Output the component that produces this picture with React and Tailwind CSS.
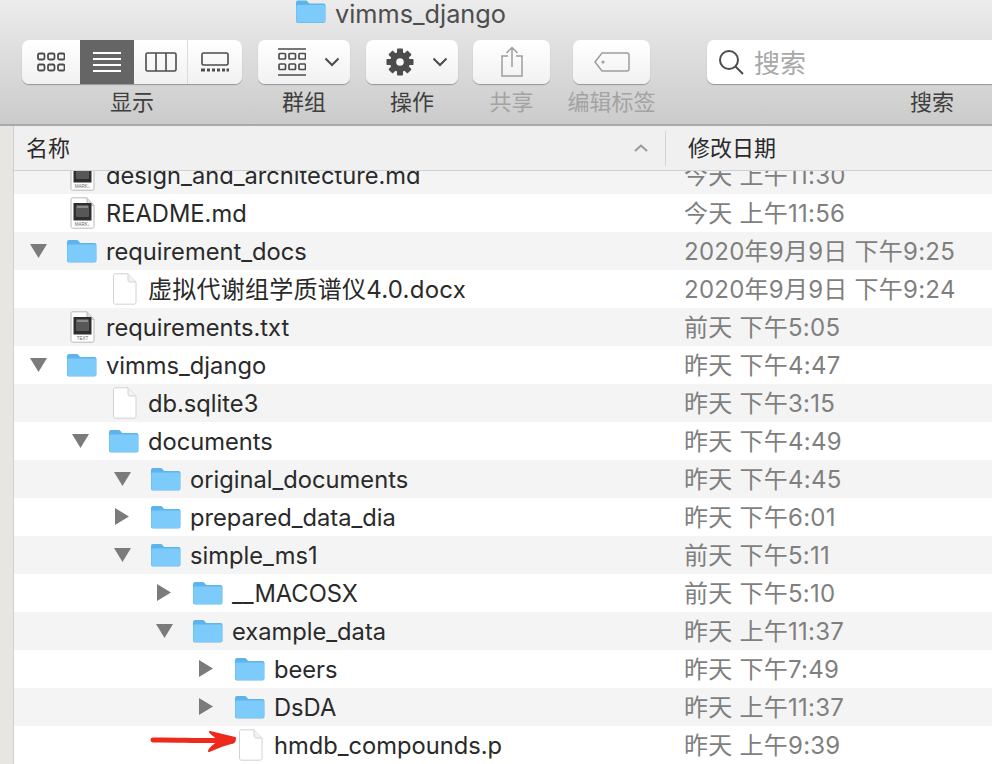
const FONT = 'font-["Inter","Noto_Sans_CJK_SC",sans-serif]';

const rows = [
  { name: "design_and_architecture.md", date: "今天 上午11:30", level: 0, icon: "md", bg: 1 },
  { name: "README.md", date: "今天 上午11:56", level: 0, icon: "md" },
  { name: "requirement_docs", date: "2020年9月9日 下午9:25", level: 0, icon: "folder", tri: "down", bg: 1 },
  { name: "虚拟代谢组学质谱仪4.0.docx", date: "2020年9月9日 下午9:24", level: 1, icon: "doc", cjk: true },
  { name: "requirements.txt", date: "前天 下午5:05", level: 0, icon: "txt", bg: 1 },
  { name: "vimms_django", date: "昨天 下午4:47", level: 0, icon: "folder", tri: "down" },
  { name: "db.sqlite3", date: "昨天 下午3:15", level: 1, icon: "doc", bg: 1 },
  { name: "documents", date: "昨天 下午4:49", level: 1, icon: "folder", tri: "down" },
  { name: "original_documents", date: "昨天 下午4:45", level: 2, icon: "folder", tri: "down", bg: 1 },
  { name: "prepared_data_dia", date: "昨天 下午6:01", level: 2, icon: "folder", tri: "right" },
  { name: "simple_ms1", date: "前天 下午5:11", level: 2, icon: "folder", tri: "down", bg: 1 },
  { name: "__MACOSX", date: "前天 下午5:10", level: 3, icon: "folder", tri: "right" },
  { name: "example_data", date: "昨天 上午11:37", level: 3, icon: "folder", tri: "down", bg: 1 },
  { name: "beers", date: "昨天 下午7:49", level: 4, icon: "folder", tri: "right" },
  { name: "DsDA", date: "昨天 上午11:37", level: 4, icon: "folder", tri: "right", bg: 1 },
  { name: "hmdb_compounds.p", date: "昨天 上午9:39", level: 4, icon: "doc", arrow: true },
];

function Folder({ className = "-ml-[2px] w-[31px] h-[24px]" }) {
  return (
    <svg viewBox="0 0 31 24" className={className}>
      <path d="M1 3.500C1 1.800 1.800 1 3 1h7.500c1.200 0 1.800.6 2.500 1.600L14 4h14.500C29.600 4 30.500 4.900 30.500 6v15.500c0 1.200-.9 2-2 2H3c-1.200 0-2-.8-2-2Z" fill="#5db4ec" />
      <path d="M1.400 7.200c0-1.100.7-1.700 1.700-1.700h25.200c1 0 1.700.6 1.700 1.700v14.200c0 .9-.7 1.500-1.600 1.500H3c-.9 0-1.600-.6-1.600-1.500Z" fill="#7ccbfb" />
    </svg>
  );
}

function Doc() {
  return (
    <svg viewBox="0 0 25 32" className="h-[32px] w-[25px]">
      <path d="M1.500 3C1.500 1.600 2.200.8 3.500.8H16l8 8.200V29c0 1.300-.8 2.200-2 2.200H3.500c-1.300 0-2-.9-2-2.200Z" fill="#fff" stroke="#d2d2d2" />
      <path d="M16 .8V7c0 1.300.8 2 2 2h6" fill="#f2f2f2" stroke="#d2d2d2" />
    </svg>
  );
}

function FileBadge({ label }) {
  return (
    <svg viewBox="0 0 25 32" className="h-[32px] w-[25px]">
      <path d="M1 2.500C1 1.400 1.600.8 2.600.8H17l7 7.400V29.500c0 1-.6 1.700-1.600 1.700H2.600c-1 0-1.600-.7-1.600-1.700Z" fill="#fff" stroke="#b9b9b9" />
      <path d="M17 .8V7c0 .8.4 1.200 1.200 1.200H24" fill="#dedede" stroke="#b9b9b9" />
      <rect x="3.500" y="6" width="18" height="17.500" fill="#2e2e2e" />
      <rect x="6.500" y="8.500" width="12" height="11" fill="#8a8a8a" />
      <rect x="6.500" y="11" width="12" height="8.500" fill="#575757" />
      <text x="12.500" y="29" textAnchor="middle" fontSize="4.500" fill="#666" fontFamily="Liberation Sans">{label}</text>
    </svg>
  );
}

function Triangle({ dir }) {
  return dir === "down" ? (
    <svg viewBox="0 0 17 14" className="h-[14px] w-[17px]"><path d="M0 0h17L8.500 14Z" fill="#7b7b7b" /></svg>
  ) : (
    <svg viewBox="0 0 14 17" className="ml-[1px] h-[17px] w-[14px]"><path d="M0 0v17L14 8.500Z" fill="#7b7b7b" /></svg>
  );
}

function Row({ r }) {
  return (
    <div className={`relative flex h-[38px] shrink-0 items-center ${r.bg ? "bg-[#f4f4f4]" : "bg-white"}`}>
      <div className="flex items-center" style={{ paddingLeft: 16 + r.level * 42 }}>
        <div className="flex w-[37px] items-center">{r.tri && <Triangle dir={r.tri} />}</div>
        <div className="flex w-[31px] justify-center">
          {r.icon === "folder" && <Folder />}
          {r.icon === "doc" && <Doc />}
          {r.icon === "md" && <FileBadge label="MARK↓" />}
          {r.icon === "txt" && <FileBadge label="TEXT" />}
        </div>
        <div className={`ml-[8px] whitespace-nowrap pt-[2px] text-[#2a2a2a] ${r.cjk ? "text-[24px] tracking-[0.25px]" : "text-[23.700px]"}`}>{r.name}</div>
      </div>
      <div className="absolute left-[670px] whitespace-nowrap pt-[2px] text-[24px] tracking-[0.25px] text-[#7f7f7f]">{r.date}</div>
      {r.arrow && (
        <svg viewBox="0 0 90 26" className="absolute left-[136px] top-[2px] h-[26px] w-[90px]">
          <path d="M3 12C25 11.500 45 13 76 12.500" stroke="#ee2a1c" strokeWidth="5" fill="none" strokeLinecap="round" />
          <path d="M60 4C68 6 77 8 85 10C85 13 84 15 81 15C73 17 65 20 59 23C60 19 65 16 70 13C67 10 63 7 60 4Z" fill="#ee2a1c" stroke="#ee2a1c" strokeWidth="2" strokeLinejoin="round" />
        </svg>
      )}
    </div>
  );
}

const btn = "flex h-[44px] items-center rounded-[7px] bg-gradient-to-b from-white to-[#f1f1f1] shadow-[0_1px_1px_rgba(0,0,0,0.3)]";

function Tool({ label, width, ml, muted, children }) {
  return (
    <div className="flex flex-col items-center" style={{ width, marginLeft: ml }}>
      {children}
      <div className={`mt-[6px] whitespace-nowrap text-[22px] leading-[24px] ${muted ? "text-[#a3a3a3]" : "text-[#3e3e3e]"}`}>{label}</div>
    </div>
  );
}

function Chevron() {
  return <svg viewBox="0 0 16 10" className="h-[10px] w-[16px]"><path d="M1.500 1.500 8 8l6.500-6.500" fill="none" stroke="#4c4c4c" strokeWidth="2" /></svg>;
}

function Grid6() {
  return (
    <svg viewBox="0 0 28 20" className="h-[20px] w-[28px]" fill="none" stroke="#4c4c4c" strokeWidth="1.800">
      {[0, 1, 2].map((i) =>
        [0, 1].map((j) => (
          <rect key={`${i}${j}`} x={1 + i * 10} y={1.500 + j * 11} width="6.500" height="6" rx="1.500" />
        ))
      )}
    </svg>
  );
}

function GridLines() {
  return (
    <svg viewBox="0 0 28 28" className="h-[28px] w-[28px]" fill="none" stroke="#4c4c4c" strokeWidth="1.700">
      <path d="M0 1h28M0 27h28" />
      {[0, 1, 2].map((i) =>
        [0, 1].map((j) => (
          <rect key={`${i}${j}`} x={1 + i * 10} y={5.500 + j * 10.500} width="6.500" height="5.500" rx="1" />
        ))
      )}
    </svg>
  );
}

export default function App() {
  return (
    <div className={`flex h-[764px] w-[992px] flex-col overflow-hidden bg-white ${FONT}`}>
      <div className="h-[126px] shrink-0 border-b-2 border-[#a9a9a9] bg-gradient-to-b from-[#ececec] to-[#cbcbcb]">
        <div className="flex h-[40px] items-start pl-[295px]">
          <Folder className="-mt-[1px] h-[25px] w-[31px]" />
          <div className="ml-[9px] text-[25.300px] leading-[28px] text-[#4d4d4d]">vimms_django</div>
        </div>
        <div className="flex items-start pl-[22px]">
          <Tool label="显示" width={220}>
            <div className={`${btn} w-[220px] overflow-hidden`}>
              <div className="flex h-full w-[58px] items-center justify-center"><Grid6 /></div>
              <div className="flex h-full w-[54px] items-center justify-center bg-[#656565]">
                <svg viewBox="0 0 28 20" className="h-[20px] w-[28px]" stroke="#fff" strokeWidth="1.800"><path d="M0 1h28M0 7h28M0 13h28M0 19h28" /></svg>
              </div>
              <div className="flex h-full w-[54px] items-center justify-center border-r border-[#dcdcdc]">
                <svg viewBox="0 0 32 20" className="h-[20px] w-[32px]" fill="none" stroke="#4c4c4c" strokeWidth="1.600"><rect x="1" y="1" width="30" height="18" rx="1.500" /><path d="M11 1v18M21 1v18" /></svg>
              </div>
              <div className="flex h-full w-[54px] items-center justify-center">
                <svg viewBox="0 0 28 20" className="h-[20px] w-[28px]"><rect x="1" y="1" width="26" height="12" rx="1.500" fill="none" stroke="#4c4c4c" strokeWidth="1.600" /><path d="M0 18h4M6 18h3M11 18h3M16 18h3M21 18h3M25.500 18h2.500" stroke="#4c4c4c" strokeWidth="3" /></svg>
              </div>
            </div>
          </Tool>
          <Tool label="群组" width={92} ml={16}>
            <div className={`${btn} w-[92px] justify-between pl-[20px] pr-[10px]`}>
              <GridLines />
              <Chevron />
            </div>
          </Tool>
          <Tool label="操作" width={92} ml={16}>
            <div className={`${btn} w-[92px] justify-between pl-[20px] pr-[10px]`}>
              <svg viewBox="0 0 28 28" className="h-[28px] w-[28px]">
                <g fill="#4c4c4c">
                  {[0, 45, 90, 135, 180, 225, 270, 315].map((a) => (
                    <rect key={a} x="11" y="0.500" width="6" height="7" rx="0.800" transform={`rotate(${a} 14 14)`} />
                  ))}
                  <path fillRule="evenodd" d="M14 4a10 10 0 1 1 0 20a10 10 0 0 1 0-20Zm0 6.200a3.800 3.800 0 1 0 0 7.600a3.800 3.800 0 0 0 0-7.600Z" />
                </g>
              </svg>
              <Chevron />
            </div>
          </Tool>
          <Tool label="共享" width={77} ml={15} muted>
            <div className={`${btn} w-[77px] justify-center`}>
              <svg viewBox="0 0 24 32" className="h-[32px] w-[24px]" fill="none" stroke="#9d9d9d" strokeWidth="1.500">
                <path d="M8 10H2v20h20V10h-6M12 21V1.500M6.500 7 12 1.500 17.500 7" />
              </svg>
            </div>
          </Tool>
          <Tool label="编辑标签" width={77} ml={23} muted>
            <div className={`${btn} w-[77px] justify-center`}>
              <svg viewBox="0 0 36 20" className="h-[20px] w-[36px]" fill="none" stroke="#9d9d9d" strokeWidth="1.500">
                <path d="M8 1h25c1.300 0 2 .7 2 2v14c0 1.300-.7 2-2 2H8L1 10Z" />
                <circle cx="9" cy="10" r="1.500" fill="#9d9d9d" stroke="none" />
              </svg>
            </div>
          </Tool>
          <div className="ml-[57px] flex w-[285px] shrink-0 flex-col items-center">
            <div className="flex h-[44px] w-full items-center rounded-l-[7px] bg-white pl-[11px] shadow-[0_1px_1px_rgba(0,0,0,0.3)]">
              <svg viewBox="0 0 26 26" className="h-[26px] w-[26px]" fill="none" stroke="#4c4c4c" strokeWidth="2"><circle cx="11" cy="11" r="9" /><path d="m17.500 17.500 7.500 7.500" /></svg>
              <div className="ml-[10px] pt-[2px] text-[26px] text-[#a8a8a8]">搜索</div>
            </div>
            <div className="mt-[6px] w-full pl-[203px] text-[22px] leading-[24px] text-[#3e3e3e]">搜索</div>
          </div>
        </div>
      </div>
      <div className="flex min-h-0 flex-1">
        <div className="w-[14px] shrink-0 border-r border-[#cfcfcf] bg-[#e8e6e3]" />
        <div className="flex min-w-0 flex-1 flex-col">
          <div className="relative z-10 flex h-[45px] shrink-0 items-center border-b border-[#d0d0d0] bg-[#f0f0f0]">
            <div className="ml-[12px] text-[22px] text-[#2a2a2a]">名称</div>
            <svg viewBox="0 0 14 8" className="absolute left-[620px] top-[18px] h-[8px] w-[14px]"><path d="M1 7 7 1.500 13 7" fill="none" stroke="#9a9a9a" strokeWidth="2" /></svg>
            <div className="absolute left-[651px] top-[5px] h-[35px] w-px bg-[#d4d4d4]" />
            <div className="absolute left-[674px] text-[22px] text-[#2a2a2a]">修改日期</div>
          </div>
          <div className="-mt-[15px] flex flex-col">
            {rows.map((r) => <Row key={r.name} r={r} />)}
          </div>
        </div>
      </div>
    </div>
  );
}
